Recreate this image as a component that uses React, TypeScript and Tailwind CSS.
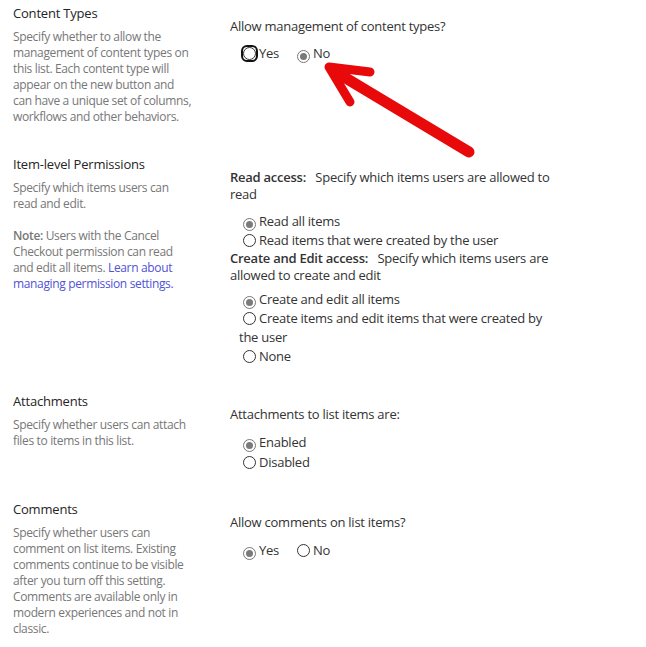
import React from "react";

function Radio({ checked, focused }: { checked?: boolean; focused?: boolean }) {
  const circle = (
    <span
      className={`inline-flex w-[13px] h-[13px] rounded-full border items-center justify-center bg-white ${
        checked ? "border-[#777]" : "border-[#333]"
      }`}
    >
      {checked && <span className="w-[7px] h-[7px] rounded-full bg-[#7a7a7a]" />}
    </span>
  );
  return (
    <span className="inline-flex align-[-2px] ml-[4px] mr-[3px]">
      {focused ? <span className="inline-flex rounded-[4px] shadow-[0_0_0_2px_#111]">{circle}</span> : circle}
    </span>
  );
}

function Option({ label, checked, focused }: { label: string; checked?: boolean; focused?: boolean }) {
  return (
    <span className="mr-[14px]">
      <Radio checked={checked} focused={focused} />
      {label}
    </span>
  );
}

function Section({
  title,
  children,
  right,
  pb,
}: {
  title: string;
  children: React.ReactNode;
  right: React.ReactNode;
  pb: string;
}) {
  return (
    <div className={`flex ${pb}`}>
      <div className="w-[230px] pl-[13px] pr-[16px] shrink-0">
        <div className="text-[13px] leading-[18px] text-[#252525] tracking-[-0.2px]">{title}</div>
        <div className="mt-[7px] text-[12px] leading-[16px] text-[#777] tracking-[-0.35px] whitespace-nowrap">
          {children}
        </div>
      </div>
      <div className="w-[340px] pt-[14px] text-[13px] text-[#333] tracking-[-0.25px] whitespace-nowrap">
        {right}
      </div>
    </div>
  );
}

export default function App() {
  return (
    <div
      className="relative w-[646px] h-[647px] bg-white pt-[4px] overflow-hidden"
      style={{ fontFamily: '"Open Sans", "Noto Sans", sans-serif' }}
    >
      <Section
        title="Content Types"
        pb="pb-[26px]"
        right={
          <>
            <div className="leading-[17px]">Allow management of content types?</div>
            <div className="mt-[8px] pl-[9px] leading-[20px]">
              <Option label="Yes" focused />
              <Option label="No" checked />
            </div>
          </>
        }
      >
        <p className="pb-[4px]">
          Specify whether to allow the
          <br />
          management of content types on
          <br />
          this list. Each content type will
          <br />
          appear on the new button and
          <br />
          can have a unique set of columns,
          <br />
          workflows and other behaviors.
        </p>
      </Section>

      <Section
        title="Item-level Permissions"
        pb="pb-[26px]"
        right={
          <>
            <div className="leading-[17px]">
              <b className="font-semibold">Read access:</b>&nbsp;&nbsp; Specify which items users are allowed to
              <br />
              read
            </div>
            <div className="mt-[9px] pl-[9px] leading-[19px]">
              <div>
                <Radio checked />
                Read all items
              </div>
              <div>
                <Radio />
                Read items that were created by the user
              </div>
            </div>
            <div className="leading-[17px]">
              <b className="font-semibold">Create and Edit access:</b>&nbsp;&nbsp; Specify which items users are
              <br />
              allowed to create and edit
            </div>
            <div className="mt-[6px] pl-[9px] leading-[19px]">
              <div>
                <Radio checked />
                Create and edit all items
              </div>
              <div>
                <Radio />
                Create items and edit items that were created by
                <br />
                the user
              </div>
              <div>
                <Radio />
                None
              </div>
            </div>
          </>
        }
      >
        <p>
          Specify which items users can
          <br />
          read and edit.
        </p>
        <p className="mt-[16px]">
          <b className="font-semibold">Note:</b> Users with the Cancel
          <br />
          Checkout permission can read
          <br />
          and edit all items.{" "}
          <a href="#" className="text-[#4f52d6]">
            Learn about
            <br />
            managing permission settings.
          </a>
        </p>
      </Section>

      <Section
        title="Attachments"
        pb="pb-[28px]"
        right={
          <>
            <div className="leading-[17px]">Attachments to list items are:</div>
            <div className="mt-[9px] pl-[9px] leading-[20px]">
              <div>
                <Radio checked />
                Enabled
              </div>
              <div>
                <Radio />
                Disabled
              </div>
            </div>
          </>
        }
      >
        <p>
          Specify whether users can attach
          <br />
          files to items in this list.
        </p>
      </Section>

      <Section
        title="Comments"
        pb=""
        right={
          <>
            <div className="leading-[17px]">Allow comments on list items?</div>
            <div className="mt-[9px] pl-[9px] leading-[20px]">
              <Option label="Yes" checked />
              <Option label="No" />
            </div>
          </>
        }
      >
        <p>
          Specify whether users can
          <br />
          comment on list items. Existing
          <br />
          comments continue to be visible
          <br />
          after you turn off this setting.
          <br />
          Comments are available only in
          <br />
          modern experiences and not in
          <br />
          classic.
        </p>
      </Section>

      <svg
        className="absolute left-0 top-0 pointer-events-none"
        width="646"
        height="647"
        viewBox="0 0 646 647"
      >
        <g stroke="#e8090b" strokeLinecap="round" strokeLinejoin="round" fill="none">
          <path d="M469 152 L334 71" strokeWidth="11" />
          <path d="M370 72 L329 67 L350 102" strokeWidth="9" />
        </g>
      </svg>
    </div>
  );
}
